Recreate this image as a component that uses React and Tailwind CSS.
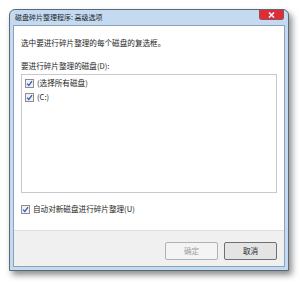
import React from 'react';

const font = { fontFamily: '"Noto Sans CJK SC", "Liberation Sans", sans-serif' };

const Check = ({ checked = true }) => (
  <span className="flex h-[9px] w-[9px] shrink-0 items-center justify-center border border-[#8f8f8f] bg-[#f0f0f0]">
    {checked && (
      <svg width="7" height="7" viewBox="0 0 7 7">
        <path d="M1 3.6 L2.8 5.4 L6 1.2" fill="none" stroke="#2f5fc0" strokeWidth="1.3" />
      </svg>
    )}
  </span>
);

const App = () => {
  return (
    <div className="h-[285px] w-[300px] bg-white pl-[9px] pt-[9px]" style={font}>
      <div className="flex h-[262px] w-[280px] flex-col rounded-t-[6px] border border-[#5b6875] bg-[#c4daf1] px-[3px] pb-[3px] shadow-[3px_4px_6px_rgba(0,0,0,0.45)]">
        {/* title bar */}
        <div className="flex h-[15px] shrink-0 items-start justify-between">
          <span className="pl-[2px] pt-[3px] text-[7px] leading-[8px] text-[#1e1e1e]">磁盘碎片整理程序: 高级选项</span>
          <div className="mr-[1px] flex h-[10px] w-[25px] items-center justify-center rounded-b-[3px] border border-t-0 border-[#8a3020] bg-red-600 opacity-80">
            <svg width="7" height="6" viewBox="0 0 7 6">
              <path d="M1 0.5 L6 5.5 M6 0.5 L1 5.5" stroke="#ffffff" strokeWidth="1.6" />
            </svg>
          </div>
        </div>
        {/* client area */}
        <div className="flex flex-1 flex-col border border-[#8da2b8] bg-white">
          <div className="flex flex-1 flex-col px-[7px]">
            <p className="pt-[12px] text-[7.6px] leading-[10px] text-[#1e1e1e]">选中要进行碎片整理的每个磁盘的复选框。</p>
            <p className="pt-[13px] text-[7.6px] leading-[10px] text-[#1e1e1e]">要进行碎片整理的磁盘(D):</p>
            <div className="mt-[3px] flex h-[119px] flex-col gap-[4px] border border-[#c8c8ce] px-[3px] pt-[3px]">
              <div className="flex items-center gap-[3px] text-[7.6px] leading-[10px] text-[#1e1e1e]">
                <Check />
                <span>(选择所有磁盘)</span>
              </div>
              <div className="flex items-center gap-[3px] text-[7.6px] leading-[10px] text-[#1e1e1e]">
                <Check />
                <span>(C:)</span>
              </div>
            </div>
            <div className="mt-[11px] flex items-center gap-[3px] text-[7.6px] leading-[10px] text-[#1e1e1e]">
              <Check />
              <span>自动对新磁盘进行碎片整理(U)</span>
            </div>
          </div>
          <div className="flex h-[36px] shrink-0 items-start justify-end gap-[6px] border-t border-[#dfdfdf] bg-[#f0f0f0] px-[7px] pt-[11px]">
            <button className="flex h-[18px] w-[53px] items-center justify-center rounded-[2px] border border-[#adb2b5] bg-[#f4f4f4] text-[7.6px] text-[#a0a0a0]">
              确定
            </button>
            <button className="flex h-[18px] w-[53px] items-center justify-center rounded-[2px] border border-[#707070] bg-[#e4e4e4] text-[7.6px] text-[#1e1e1e]">
              取消
            </button>
          </div>
        </div>
      </div>
    </div>
  );
};

export default App;
